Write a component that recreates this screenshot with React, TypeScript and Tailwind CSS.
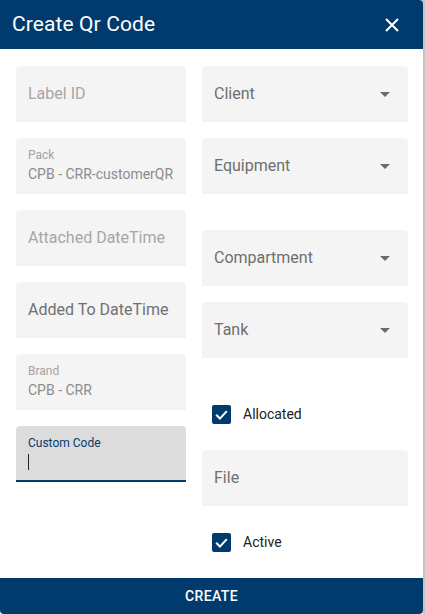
import React from "react";

const font = { fontFamily: "Roboto, 'Liberation Sans', sans-serif" };

function Field({ label, value, dim = false }: { label: string; value?: string; dim?: boolean }) {
  if (value) {
    return (
      <div className="h-14 bg-[#f4f4f4] rounded-t-[4px] px-3 pt-[9px]">
        <div className="text-[12px] leading-[16px] text-[#a3a3a3]">{label}</div>
        <div className="text-[14px] leading-[20px] mt-[1px] text-[#8c8c8c] whitespace-nowrap">{value}</div>
      </div>
    );
  }
  return (
    <div className="h-14 bg-[#f4f4f4] rounded-t-[4px] px-3 flex items-center">
      <span className={`text-[16px] whitespace-nowrap ${dim ? "text-[#a6a6a6]" : "text-[#707070]"}`}>{label}</span>
    </div>
  );
}

function Select({ label }: { label: string }) {
  return (
    <div className="h-14 bg-[#f4f4f4] rounded-t-[4px] pl-3 pr-[18px] flex items-center justify-between">
      <span className="text-[16px] text-[#6e6e6e]">{label}</span>
      <svg width="10" height="5" viewBox="0 0 10 5">
        <path d="M0 0 L10 0 L5 5 Z" fill="#6b6b6b" />
      </svg>
    </div>
  );
}

function Check({ label }: { label: string }) {
  return (
    <div className="flex items-center pl-[10px] gap-[12px]">
      <div className="w-[19px] h-[19px] rounded-[2px] bg-[#013b6e] flex items-center justify-center">
        <svg width="15" height="15" viewBox="0 0 24 24">
          <path d="M3.5 12.5 L9.5 18.5 L20.5 6.5" stroke="white" strokeWidth="3.2" fill="none" />
        </svg>
      </div>
      <span className="text-[14px] text-[#212121]">{label}</span>
    </div>
  );
}

export default function App() {
  return (
    <div className="w-[425px] h-[614px] bg-[#c4c4c4] overflow-hidden" style={font}>
      <div className="w-[423px] h-[614px] bg-white flex flex-col rounded-tr-[4px] overflow-hidden">
        <div className="h-[49px] bg-[#013b6e] flex items-center justify-between pl-3 pr-[24px] shrink-0">
          <h1 className="text-white text-[21px] tracking-[0.1px]">Create Qr Code</h1>
          <svg width="14" height="14" viewBox="0 0 14 14">
            <path d="M1 1 L13 13 M13 1 L1 13" stroke="white" strokeWidth="2" />
          </svg>
        </div>

        <div className="flex-1 flex gap-4 pl-4 pr-[15px] pt-[17px]">
          <div className="w-[170px] flex flex-col gap-4">
            <Field label="Label ID" dim />
            <Field label="Pack" value="CPB - CRR-customerQR" />
            <Field label="Attached DateTime" dim />
            <Field label="Added To DateTime" />
            <Field label="Brand" value="CPB - CRR" />
            <div className="h-14 bg-[#dcdcdc] rounded-t-[4px] px-3 pt-[9px] border-b-2 border-[#013b6e]">
              <div className="text-[12px] leading-[16px] text-[#013b6e]">Custom Code</div>
              <div className="w-px h-[16px] bg-[#222] mt-[3px]" />
            </div>
          </div>

          <div className="flex-1 flex flex-col">
            <Select label="Client" />
            <div className="mt-4">
              <Select label="Equipment" />
            </div>
            <div className="mt-[36px]">
              <Select label="Compartment" />
            </div>
            <div className="mt-4">
              <Select label="Tank" />
            </div>
            <div className="h-12 mt-8 flex items-center">
              <Check label="Allocated" />
            </div>
            <div className="mt-3">
              <Field label="File" />
            </div>
            <div className="h-12 mt-3 flex items-center">
              <Check label="Active" />
            </div>
          </div>
        </div>

        <button className="h-9 shrink-0 bg-[#013b6e] text-white text-[14px] font-medium tracking-[0.4px] rounded-b-[4px]">
          CREATE
        </button>
      </div>
    </div>
  );
}
